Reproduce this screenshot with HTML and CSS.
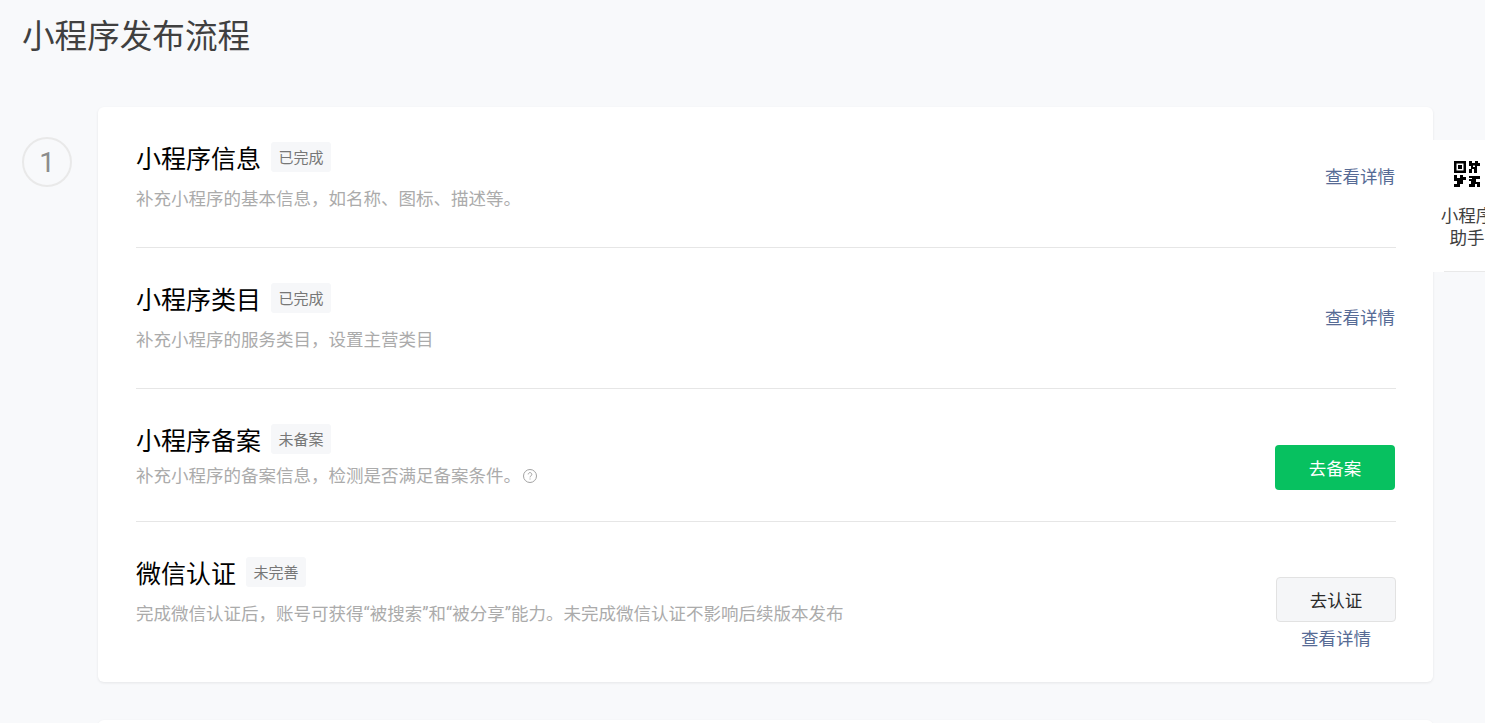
FILE: index.html
```html
<!DOCTYPE html>
<html lang="zh-CN">
<head>
<meta charset="utf-8">
<title>小程序发布流程</title>
<link rel="stylesheet" href="styles.css">
</head>
<body>
<main class="page">
  <h1 class="page-title">小程序发布流程</h1>
  <section class="step">
    <div class="step-num">1</div>
    <div class="card">
      <div class="row row-a">
        <div class="info">
          <div class="head"><span class="name">小程序信息</span><span class="tag">已完成</span></div>
          <p class="desc">补充小程序的基本信息，如名称、图标、描述等。</p>
        </div>
        <div class="actions"><a class="link">查看详情</a></div>
      </div>
      <div class="row row-b">
        <div class="info">
          <div class="head"><span class="name">小程序类目</span><span class="tag">已完成</span></div>
          <p class="desc">补充小程序的服务类目，设置主营类目</p>
        </div>
        <div class="actions"><a class="link">查看详情</a></div>
      </div>
      <div class="row row-c">
        <div class="info">
          <div class="head"><span class="name">小程序备案</span><span class="tag">未备案</span></div>
          <p class="desc tight">补充小程序的备案信息，检测是否满足备案条件。<svg class="help" viewBox="0 0 16 16" width="16" height="16"><circle cx="8" cy="8" r="6.5" fill="none" stroke="#a3a3a3" stroke-width="1"/><path d="M6.2 6.4a1.8 1.8 0 1 1 2.8 1.5c-.7.4-1 .7-1 1.5" fill="none" stroke="#a3a3a3" stroke-width="1"/><rect x="7.5" y="10.5" width="1" height="1" fill="#a3a3a3"/></svg></p>
        </div>
        <div class="actions"><button class="btn primary">去备案</button></div>
      </div>
      <div class="row row-d">
        <div class="info">
          <div class="head"><span class="name">微信认证</span><span class="tag">未完善</span></div>
          <p class="desc">完成微信认证后，账号可获得“被搜索”和“被分享”能力。未完成微信认证不影响后续版本发布</p>
        </div>
        <div class="actions stacked">
          <button class="btn plain">去认证</button>
          <a class="link">查看详情</a>
        </div>
      </div>
    </div>
  </section>
  <section class="step"><div class="step-spacer"></div><div class="card next"></div></section>
</main>
<aside class="helper">
  <svg class="qr" viewBox="0 0 26 26" width="26" height="26">
    <path fill="#000" fill-rule="evenodd" d="M0 0h12v12H0zM2.500 2.500v7h7v-7zM4 4h4v4H4z"/>
    <path fill="#000" d="M15 0h3v2h3V0h3v2h2v3h-3v7h-3V8h-2v4h-3V8h2V5h-2V2h0zM19 4.500v1.500h2V4.500z"/>
    <path fill="#000" d="M0 14h3v3h3v-3h3v2h3v3H9v4H6v3H0v-3h3v-3H0v-2h0z"/>
    <path fill="#000" d="M15 15h11v3h-4v3h4v5h-3v-3h-2v3h-6v-3h2v-3h-2v-2h3v-1h-3z"/>
  </svg>
  <div class="helper-text">小程序助手</div>
</aside>
</body>
</html>
```
FILE: styles.css
```css
* { box-sizing: border-box; }
html, body { height: 100%; margin: 0; overflow: hidden; }
body {
  background: #f8f9fb;
  font-family: "Noto Sans CJK SC", "Liberation Sans", sans-serif;
  color: #353535;
}
.page { padding: 0 52px 0 22px; }
.page-title {
  margin: 0 0 47px;
  height: 60px;
  line-height: 68px;
  font-size: 32.6px;
  font-weight: 400;
  color: #404040;
}
.step { display: flex; margin-bottom: 38px; }
.step-num {
  width: 50px;
  height: 50px;
  margin: 30px 26px 0 0;
  flex: none;
  border: 2px solid #e9e9e9;
  border-radius: 50%;
  display: flex;
  align-items: center;
  justify-content: center;
  font-family: Roboto, sans-serif;
  font-weight: 400;
  font-size: 28px;
  color: #8c8c8c;
}
.step-spacer { width: 76px; flex: none; }
.card {
  flex: 1;
  background: #fff;
  border-radius: 6px;
  box-shadow: 0 1px 3px rgba(0, 0, 0, .08);
  padding: 0 37px 0 38px;
}
.card.next { height: 100px; }
.row {
  display: flex;
  justify-content: space-between;
  align-items: flex-start;
  padding-top: 35px;
  border-bottom: 1px solid #e6e6e6;
}
.row-a, .row-b { height: 141px; }
.row-c { height: 133px; }
.row-d { height: 160px; border-bottom: 0; }
.info { min-width: 0; }
.head { display: flex; align-items: center; }
.name { font-size: 25px; line-height: 30px; color: #000; }
.tag {
  margin-left: 10px;
  width: 60px;
  height: 30px;
  border-radius: 3px;
  background: #f6f7f9;
  font-size: 15px;
  line-height: 29px;
  text-align: center;
  color: #777;
}
.desc {
  margin: 12px 0 0;
  font-family: Roboto, "Noto Sans CJK SC", sans-serif;
  font-size: 17.5px;
  line-height: 30px;
  color: #ababab;
  white-space: nowrap;
  display: flex;
  align-items: center;
}
.desc.tight { margin-top: 7px; }
.help { margin-left: 1px; flex: none; }
.actions { display: flex; justify-content: flex-end; margin-top: 21px; }
.stacked { flex-direction: column; align-items: center; margin-top: 20px; }
.link { font-size: 17.5px; line-height: 26px; color: #576b95; cursor: pointer; margin-right: 1px; }
.stacked .link { margin: 3px 0 0; }
.btn {
  width: 120px;
  height: 45px;
  border-radius: 4px;
  font-family: inherit;
  font-size: 17.5px;
  padding: 0;
}
.primary { background: #07c160; border: 0; color: #fff; margin-right: 1px; }
.plain { background: #f5f6f8; border: 1px solid #e2e2e2; color: #2b2b2b; }
.helper {
  position: fixed;
  top: 140px;
  right: -16px;
  width: 68px;
  height: 132px;
  background: #fff;
  display: flex;
  flex-direction: column;
  align-items: center;
  padding-top: 21px;
}
.helper::after {
  content: "";
  position: absolute;
  left: 11px;
  right: 0;
  bottom: 0;
  height: 1px;
  background: #e9e9e9;
}
.qr { flex: none; }
.helper-text {
  margin-top: 17px;
  width: 54px;
  font-size: 17.5px;
  line-height: 22px;
  text-align: center;
  color: #404040;
}
```
